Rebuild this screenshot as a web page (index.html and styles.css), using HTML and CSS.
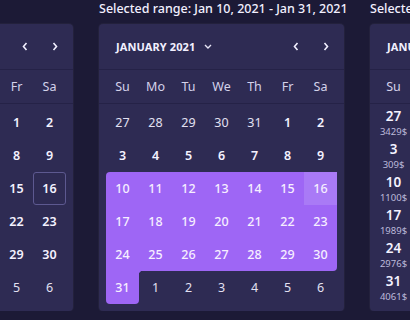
FILE: index.html
```html
<!DOCTYPE html>
<html lang="en">
<head>
    <meta charset="UTF-8">
    <meta name="viewport" content="width=device-width, initial-scale=1.0">
    <title>Range Calendar</title>
    <link rel="stylesheet" href="styles.css">
</head>
<body>

<div class="months">

    <!-- Plain calendar -->
    <div class="month">
        <div class="range-title">Default</div>
        <div class="card">
            <div class="card-head">
                <span class="month-name">JANUARY 2021</span>
                <svg class="caret" width="8" height="5" viewBox="0 0 8 5"><path d="M1 1l3 3 3-3" fill="none" stroke="#e6e4f5" stroke-width="1.4"/></svg>
                <span class="nav">
                    <button class="nav-btn"><svg width="6" height="9" viewBox="0 0 6 9"><path d="M4.5 1L1.5 4.5 4.5 8" fill="none" stroke="#f2f0ff" stroke-width="1.6"/></svg></button>
                    <button class="nav-btn"><svg width="6" height="9" viewBox="0 0 6 9"><path d="M1.5 1l3 3.5-3 3.5" fill="none" stroke="#f2f0ff" stroke-width="1.6"/></svg></button>
                </span>
            </div>
            <div class="weekdays">
                <span>Su</span><span>Mo</span><span>Tu</span><span>We</span><span>Th</span><span>Fr</span><span>Sa</span>
            </div>
            <div class="days">
                <span class="day out">27</span><span class="day out">28</span><span class="day out">29</span><span class="day out">30</span><span class="day out">31</span><span class="day">1</span><span class="day">2</span>
                <span class="day">3</span><span class="day">4</span><span class="day">5</span><span class="day">6</span><span class="day">7</span><span class="day">8</span><span class="day">9</span>
                <span class="day">10</span><span class="day">11</span><span class="day">12</span><span class="day">13</span><span class="day">14</span><span class="day">15</span><span class="day today">16</span>
                <span class="day">17</span><span class="day">18</span><span class="day">19</span><span class="day">20</span><span class="day">21</span><span class="day">22</span><span class="day">23</span>
                <span class="day">24</span><span class="day">25</span><span class="day">26</span><span class="day">27</span><span class="day">28</span><span class="day">29</span><span class="day">30</span>
                <span class="day">31</span><span class="day out">1</span><span class="day out">2</span><span class="day out">3</span><span class="day out">4</span><span class="day out">5</span><span class="day out">6</span>
            </div>
        </div>
    </div>

    <!-- Range calendar -->
    <div class="month">
        <div class="range-title">Selected range: Jan 10, 2021 - Jan 31, 2021</div>
        <div class="card">
            <div class="card-head">
                <span class="month-name">JANUARY 2021</span>
                <svg class="caret" width="8" height="5" viewBox="0 0 8 5"><path d="M1 1l3 3 3-3" fill="none" stroke="#e6e4f5" stroke-width="1.4"/></svg>
                <span class="nav">
                    <button class="nav-btn"><svg width="6" height="9" viewBox="0 0 6 9"><path d="M4.5 1L1.5 4.5 4.5 8" fill="none" stroke="#f2f0ff" stroke-width="1.6"/></svg></button>
                    <button class="nav-btn"><svg width="6" height="9" viewBox="0 0 6 9"><path d="M1.5 1l3 3.5-3 3.5" fill="none" stroke="#f2f0ff" stroke-width="1.6"/></svg></button>
                </span>
            </div>
            <div class="weekdays">
                <span>Su</span><span>Mo</span><span>Tu</span><span>We</span><span>Th</span><span>Fr</span><span>Sa</span>
            </div>
            <div class="days">
                <span class="day out">27</span><span class="day out">28</span><span class="day out">29</span><span class="day out">30</span><span class="day out">31</span><span class="day">1</span><span class="day">2</span>
                <span class="day">3</span><span class="day">4</span><span class="day">5</span><span class="day">6</span><span class="day">7</span><span class="day">8</span><span class="day">9</span>
                <span class="day in-range range-start">10</span><span class="day in-range">11</span><span class="day in-range">12</span><span class="day in-range">13</span><span class="day in-range">14</span><span class="day in-range">15</span><span class="day in-range hovered">16</span>
                <span class="day in-range">17</span><span class="day in-range">18</span><span class="day in-range">19</span><span class="day in-range">20</span><span class="day in-range">21</span><span class="day in-range">22</span><span class="day in-range">23</span>
                <span class="day in-range">24</span><span class="day in-range">25</span><span class="day in-range">26</span><span class="day in-range">27</span><span class="day in-range">28</span><span class="day in-range">29</span><span class="day in-range week-end">30</span>
                <span class="day in-range range-end">31</span><span class="day out notch">1</span><span class="day out">2</span><span class="day out">3</span><span class="day out">4</span><span class="day out">5</span><span class="day out">6</span>
            </div>
        </div>
    </div>

    <!-- Calendar with prices -->
    <div class="month">
        <div class="range-title">Selected range: Jan 10, 2021 - Jan 31, 2021</div>
        <div class="card">
            <div class="card-head">
                <span class="month-name">JANUARY 2021</span>
                <svg class="caret" width="8" height="5" viewBox="0 0 8 5"><path d="M1 1l3 3 3-3" fill="none" stroke="#e6e4f5" stroke-width="1.4"/></svg>
                <span class="nav">
                    <button class="nav-btn"><svg width="6" height="9" viewBox="0 0 6 9"><path d="M4.5 1L1.5 4.5 4.5 8" fill="none" stroke="#f2f0ff" stroke-width="1.6"/></svg></button>
                    <button class="nav-btn"><svg width="6" height="9" viewBox="0 0 6 9"><path d="M1.5 1l3 3.5-3 3.5" fill="none" stroke="#f2f0ff" stroke-width="1.6"/></svg></button>
                </span>
            </div>
            <div class="weekdays">
                <span>Su</span><span>Mo</span><span>Tu</span><span>We</span><span>Th</span><span>Fr</span><span>Sa</span>
            </div>
            <div class="days">
                <span class="day priced"><b>27</b><small>3429$</small></span><span class="day priced"><b>28</b><small>1250$</small></span><span class="day priced"><b>29</b><small>870$</small></span><span class="day priced"><b>30</b><small>2310$</small></span><span class="day priced"><b>31</b><small>990$</small></span><span class="day priced"><b>1</b><small>1480$</small></span><span class="day priced"><b>2</b><small>3050$</small></span>
                <span class="day priced"><b>3</b><small>309$</small></span><span class="day priced"><b>4</b><small>1730$</small></span><span class="day priced"><b>5</b><small>2240$</small></span><span class="day priced"><b>6</b><small>610$</small></span><span class="day priced"><b>7</b><small>1890$</small></span><span class="day priced"><b>8</b><small>2770$</small></span><span class="day priced"><b>9</b><small>420$</small></span>
                <span class="day priced"><b>10</b><small>1100$</small></span><span class="day priced"><b>11</b><small>3120$</small></span><span class="day priced"><b>12</b><small>760$</small></span><span class="day priced"><b>13</b><small>2045$</small></span><span class="day priced"><b>14</b><small>1390$</small></span><span class="day priced"><b>15</b><small>2580$</small></span><span class="day priced"><b>16</b><small>940$</small></span>
                <span class="day priced"><b>17</b><small>1989$</small></span><span class="day priced"><b>18</b><small>2690$</small></span><span class="day priced"><b>19</b><small>530$</small></span><span class="day priced"><b>20</b><small>1620$</small></span><span class="day priced"><b>21</b><small>3340$</small></span><span class="day priced"><b>22</b><small>1075$</small></span><span class="day priced"><b>23</b><small>2190$</small></span>
                <span class="day priced"><b>24</b><small>2976$</small></span><span class="day priced"><b>25</b><small>815$</small></span><span class="day priced"><b>26</b><small>1540$</small></span><span class="day priced"><b>27</b><small>2410$</small></span><span class="day priced"><b>28</b><small>690$</small></span><span class="day priced"><b>29</b><small>3210$</small></span><span class="day priced"><b>30</b><small>1830$</small></span>
                <span class="day priced"><b>31</b><small>4061$</small></span><span class="day priced"><b>1</b><small>1160$</small></span><span class="day priced"><b>2</b><small>2350$</small></span><span class="day priced"><b>3</b><small>580$</small></span><span class="day priced"><b>4</b><small>1940$</small></span><span class="day priced"><b>5</b><small>2820$</small></span><span class="day priced"><b>6</b><small>730$</small></span>
            </div>
        </div>
    </div>

</div>

</body>
</html>
```

FILE: styles.css
```css
/* Basic Reset */
* {
    margin: 0;
    padding: 0;
    box-sizing: border-box;
}
body {
    font-family: "Noto Sans", "Open Sans", sans-serif;
    background-color: #1c1a36;
    color: #f2f0ff;
    overflow: hidden;
}
.months {
    display: flex;
    gap: 26px;
    margin-left: -172px;
}
.month {
    flex: none;
    width: 245px;
}
.range-title {
    height: 18px;
    line-height: 18px;
    margin-bottom: 6px;
    font-size: 12.5px;
    font-weight: 500;
    text-align: center;
    white-space: nowrap;
}
.card {
    background-color: #2e2b53;
    border-radius: 4px;
    box-shadow: 0 0 0 1px rgba(255, 255, 255, 0.03);
}
.card-head {
    height: 46px;
    display: flex;
    align-items: center;
    padding: 0 3px 0 17px;
    border-bottom: 1px solid #252247;
}
.month-name {
    font-size: 11px;
    font-weight: 700;
    letter-spacing: 0.1px;
}
.caret {
    margin-left: 9px;
}
.nav {
    margin-left: auto;
    display: flex;
}
.nav-btn {
    width: 30px;
    height: 30px;
    display: flex;
    align-items: center;
    justify-content: center;
    background: none;
    border: none;
    cursor: pointer;
}
.weekdays {
    height: 34px;
    display: grid;
    grid-template-columns: repeat(7, 33px);
    align-items: center;
    padding: 0 7px;
    border-bottom: 1px solid #252247;
    font-size: 12.5px;
    color: #d4d2ea;
    text-align: center;
}
.days {
    display: grid;
    grid-template-columns: repeat(7, 33px);
    grid-auto-rows: 33px;
    padding: 2px 7px 7px;
}
.day {
    display: flex;
    align-items: center;
    justify-content: center;
    font-size: 12.5px;
    font-weight: 600;
    color: #f4f2ff;
}
.day.out {
    font-weight: 400;
    color: #e2e0f2;
}
.today {
    border: 1px solid #5d5990;
    border-radius: 3px;
}
.in-range {
    background-color: #9e66f5;
    font-weight: 500;
    color: #f6efff;
}
.in-range.hovered {
    background-color: #a97af6;
}
.range-start {
    border-top-left-radius: 4px;
}
.week-end {
    border-bottom-right-radius: 4px;
}
.range-end {
    border-bottom-left-radius: 4px;
    border-bottom-right-radius: 4px;
}
.notch {
    background: radial-gradient(circle at 100% 100%, transparent 4px, #9e66f5 4.5px) top left / 4px 4px no-repeat;
}
.priced {
    flex-direction: column;
}
.priced b {
    font-size: 13.5px;
    font-weight: 600;
    line-height: 18px;
}
.priced small {
    font-size: 9.5px;
    font-weight: 400;
    line-height: 13px;
    color: #bdbadb;
}
```
